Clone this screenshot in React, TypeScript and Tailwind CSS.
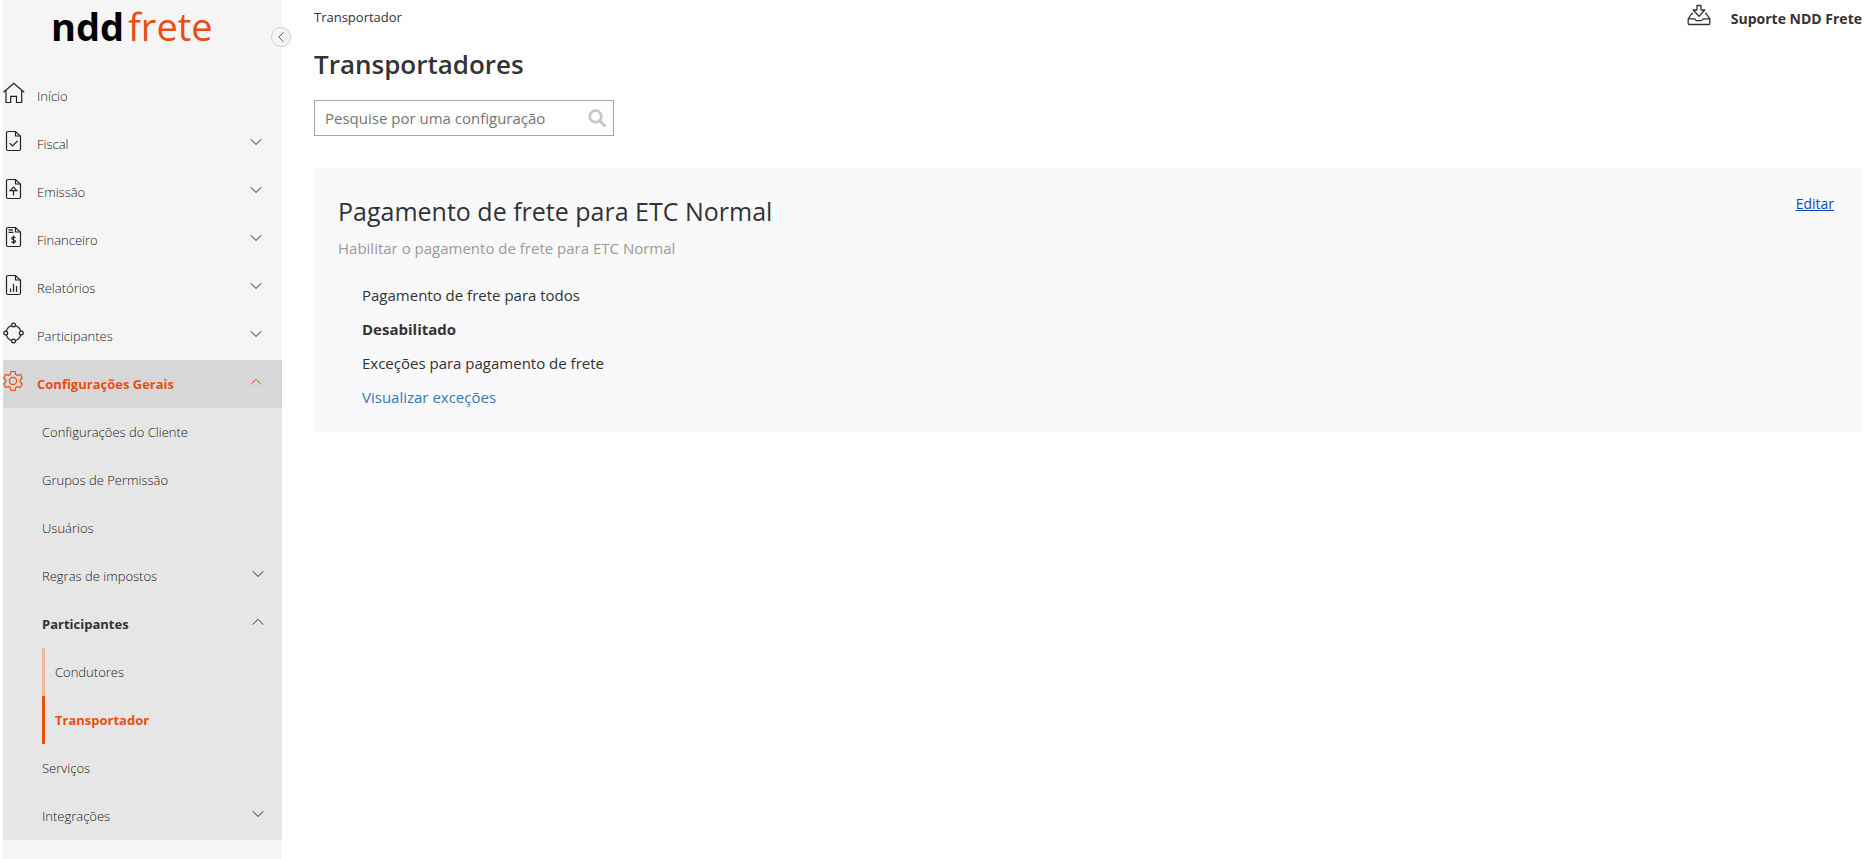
import { clsx } from "clsx";
import type { ReactNode } from "react";

interface IconProps {
	children: ReactNode;
}

function MenuIcon({ children }: IconProps) {
	return (
		<svg
			viewBox="0 0 22 22"
			className="size-[22px] shrink-0 stroke-[1.2]"
			fill="none"
			stroke="currentColor"
			aria-hidden="true"
		>
			{children}
		</svg>
	);
}

function Sheet() {
	return (
		<>
			<path d="M12.5 1.5H5A1.5 1.5 0 0 0 3.5 3v16A1.5 1.5 0 0 0 5 20.5h11a1.5 1.5 0 0 0 1.5-1.5V6.2z" />
			<path d="M12.5 1.5V6h5" />
		</>
	);
}

const icons = {
	home: <path d="M.5 10.2 10.8 1.3l10.4 8.9M3 8.5v12h4.7v-6.2h5.8v6.2h5.2v-12" />,
	fiscal: (
		<>
			<Sheet />
			<path d="m6.6 13.2 2.8 2.8 5.2-5" />
		</>
	),
	emissao: (
		<>
			<Sheet />
			<path d="M10.5 17.5v-5M7.2 12.6l3.3-3.5 3.3 3.5z" />
		</>
	),
	financeiro: (
		<>
			<Sheet />
			<path d="M5.5 3.8h4.5M5.5 6.3h5" />
			<path d="M12.4 12c-.3-.7-.9-1-1.9-1-1.1 0-1.8.5-1.8 1.3 0 1.8 3.8 1.2 3.8 3 0 .9-.8 1.4-2 1.4-1 0-1.7-.4-2-1.1M10.5 9.500v8.500" />
		</>
	),
	relatorios: (
		<>
			<Sheet />
			<path d="M7.5 14.5V18M10.5 10v8M13.5 12v6" />
		</>
	),
	participantes: (
		<>
			<circle cx="10.5" cy="3" r="1.9" />
			<circle cx="10.5" cy="19" r="1.9" />
			<circle cx="2.7" cy="11" r="1.9" />
			<circle cx="18.3" cy="11" r="1.9" />
			<path d="M8.6 3.6a7.7 7.7 0 0 0-5.3 5.6M12.4 3.6a7.7 7.7 0 0 1 5.3 5.6M8.6 18.4a7.7 7.7 0 0 1-5.3-5.6M12.4 18.4a7.7 7.7 0 0 0 5.3-5.6" />
		</>
	),
	config: (
		<>
			<circle cx="10" cy="11" r="3.6" />
			<path
				d="M8 1.5h4l.7 2.9 1.7 1 2.9-.9 2 3.5-2.1 2v2l2.100 2-2 3.500-2.900-.9-1.700 1-.7 2.900H8l-.7-2.900-1.700-1-2.900.9-2-3.500 2.100-2v-2L.7 8l2-3.500 2.900.9 1.700-1z"
				strokeLinejoin="round"
			/>
		</>
	),
};

function Chevron({ open = false }: { open?: boolean }) {
	return (
		<svg
			viewBox="0 0 12 8"
			className="mb-1.5 h-2 w-3 shrink-0"
			fill="none"
			stroke="currentColor"
			aria-hidden="true"
		>
			<path d={open ? "M.8 6.5 6 1.3l5.2 5.2" : "M.8 1.3 6 6.5l5.2-5.2"} />
		</svg>
	);
}

const menu: { label: string; icon: keyof typeof icons; expandable: boolean }[] = [
	{ label: "Início", icon: "home", expandable: false },
	{ label: "Fiscal", icon: "fiscal", expandable: true },
	{ label: "Emissão", icon: "emissao", expandable: true },
	{ label: "Financeiro", icon: "financeiro", expandable: true },
	{ label: "Relatórios", icon: "relatorios", expandable: true },
	{ label: "Participantes", icon: "participantes", expandable: true },
	{ label: "Configurações Gerais", icon: "config", expandable: true },
];

function SubItem({ label, state }: { label: string; state?: "open" | "closed" }) {
	const className = clsx(
		"flex h-12 w-full items-center justify-between pt-0.5 pr-[18px] pl-[39px] text-left",
		state === "open" && "font-bold text-[#333]",
	);
	if (!state) {
		return (
			<a href="#" className={className}>
				{label}
			</a>
		);
	}
	return (
		<button type="button" aria-expanded={state === "open"} className={className}>
			<span>{label}</span>
			<Chevron open={state === "open"} />
		</button>
	);
}

function Sidebar() {
	return (
		<aside className="relative ml-[3px] w-[279px] shrink-0 bg-[#f5f5f5]">
			<a
				href="#"
				className="flex h-[72px] gap-1 pl-12 text-[38px] leading-[52px]"
			>
				<span className="font-bold text-black">ndd</span>
				<span className="font-medium text-[#e84e0f]">frete</span>
			</a>
			<button
				type="button"
				aria-label="Recolher menu"
				className="absolute top-[27px] -right-[9px] flex size-5 items-center justify-center rounded-full border border-[#ccc] bg-[#f5f5f5] text-[#555]"
			>
				<svg viewBox="0 0 8 12" className="h-3 w-2" fill="none" stroke="currentColor" aria-hidden="true">
					<path d="M6.5 1.3 1.8 6l4.7 4.7" />
				</svg>
			</button>

			<nav className="text-[13px] font-light text-[#222]">
				{menu.map(({ label, icon, expandable }) => {
					const active = icon === "config";
					return (
						<button
							key={label}
							type="button"
							aria-expanded={expandable ? active : undefined}
							className={clsx(
								"flex h-12 w-full items-center pt-0.5 pr-5 text-left",
								active && "bg-[#d7d7d7] font-bold text-[#e8500a]",
							)}
						>
							<span className="pb-2">
								<MenuIcon>{icons[icon]}</MenuIcon>
							</span>
							<span className="ml-3 flex-1">{label}</span>
							{expandable && <Chevron open={active} />}
						</button>
					);
				})}

				<div className="bg-[#e6e6e6]">
					<SubItem label="Configurações do Cliente" />
					<SubItem label="Grupos de Permissão" />
					<SubItem label="Usuários" />
					<SubItem label="Regras de impostos" state="closed" />
					<SubItem label="Participantes" state="open" />
					<div className="pl-[39px]">
						<a
							href="#"
							className="flex h-12 items-center border-l-3 border-[#ebb8a3] pt-0.5 pl-[10px]"
						>
							Condutores
						</a>
						<a
							href="#"
							aria-current="page"
							className="flex h-12 items-center border-l-3 border-[#e8500a] pt-0.5 pl-[10px] font-bold text-[#e8500a]"
						>
							Transportador
						</a>
					</div>
					<SubItem label="Serviços" />
					<SubItem label="Integrações" state="closed" />
				</div>
			</nav>
		</aside>
	);
}

function SearchBox() {
	return (
		<label className="mt-4 flex h-9 w-[300px] items-center border border-[#a6a6a6] pr-[7px] pl-[10px]">
			<input
				type="search"
				aria-label="Pesquise por uma configuração"
				placeholder="Pesquise por uma configuração"
				className="min-w-0 flex-1 text-[15px] outline-none placeholder:text-[#757575]"
			/>
			<svg viewBox="0 0 18 18" className="size-[18px]" fill="none" stroke="#c8c8c8" aria-hidden="true">
				<circle cx="7.5" cy="7.5" r="5.8" strokeWidth="2.8" />
				<path d="m11.8 11.8 4.5 4.5" strokeWidth="3.2" strokeLinecap="round" />
			</svg>
		</label>
	);
}

export default function App() {
	return (
		<div className="flex min-h-screen bg-white font-['Open_Sans','Noto_Sans',sans-serif] text-[#333]">
			<Sidebar />

			<main className="min-w-0 flex-1 pr-[11px] pl-8">
				<header className="flex h-9 items-center justify-between">
					<span className="text-[13px]">Transportador</span>
					<div className="flex items-center gap-5">
						<svg
							viewBox="0 0 24 22"
							className="mb-1.5 h-[22px] w-6"
							fill="none"
							stroke="currentColor"
							strokeWidth="1.3"
							strokeLinejoin="round"
							aria-hidden="true"
						>
							<path d="M10 1.500h4V6h3.800L12 12.300 6.200 6H10z" />
							<path d="M6 9.500H4.800L1.200 14.800v4.700a1 1 0 0 0 1 1h19.600a1 1 0 0 0 1-1v-4.700L19.200 9.500H18M1.200 14.800h6.500l1.600 1.900h5.400l1.600-1.900h6.500" />
						</svg>
						<strong className="text-[14px] font-bold">Suporte NDD Frete</strong>
					</div>
				</header>

				<h1 className="mt-2.5 mb-[18px] text-[26px] leading-9 font-semibold">
					Transportadores
				</h1>
				<SearchBox />

				<section className="mt-8 flex items-start justify-between bg-[#f9f9fc] px-6 pt-6 pb-[18px]">
					<div>
						<h2 className="text-[25px] leading-[38px] font-medium">
							Pagamento de frete para ETC Normal
						</h2>
						<p className="mt-0.5 text-[15px] leading-8 text-[#999]">
							Habilitar o pagamento de frete para ETC Normal
						</p>
						<dl className="mt-[14px] pl-6 text-[15px] leading-[34px]">
							<dt>Pagamento de frete para todos</dt>
							<dd className="font-bold">Desabilitado</dd>
							<dt>Exceções para pagamento de frete</dt>
							<dd>
								<a href="#" className="text-[#337ab7]">
									Visualizar exceções
								</a>
							</dd>
						</dl>
					</div>
					<a href="#" className="mr-1 text-[14px] leading-6 text-[#0b49c1] underline">
						Editar
					</a>
				</section>
			</main>
		</div>
	);
}
